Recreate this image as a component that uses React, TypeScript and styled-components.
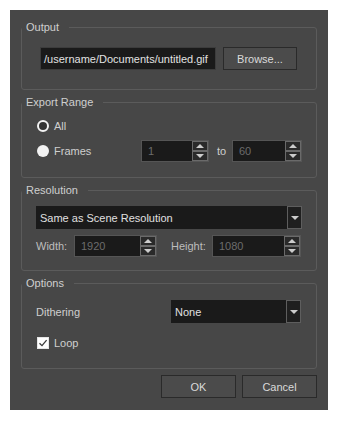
import React, { FC } from "react"
import styled, { createGlobalStyle } from "styled-components"

const GlobalStyle = createGlobalStyle`
  body {
    margin: 0;
    background: #ffffff;
    font-family: "Liberation Sans", Arial, sans-serif;
    font-size: 11px;
  }
`

const Dialog = styled.div`
  margin: 10px 0 0 10px;
  width: 318px;
  height: 400px;
  box-sizing: border-box;
  background: #474747;
  padding: 10px 11px 0 11px;
  display: flex;
  flex-direction: column;
  gap: 5px;
  color: #cfcfcf;
`

const Group = styled.fieldset<{ pad: string }>`
  margin: 0;
  min-width: 0;
  border: 1px solid #5b5b5b;
  border-radius: 3px;
  padding: ${({ pad }) => pad};
  display: flex;
  flex-direction: column;
`

const Legend = styled.legend<{ shift: number }>`
  margin-left: ${({ shift }) => -shift}px;
  padding: 0 10px 0 4px;
  line-height: 14px;
  color: #cfcfcf;
`

const Row = styled.div<{ gap?: number; top?: number }>`
  display: flex;
  align-items: center;
  gap: ${({ gap }) => gap ?? 0}px;
  margin-top: ${({ top }) => top ?? 0}px;
`

const PathField = styled.div`
  width: 176px;
  height: 23px;
  box-sizing: border-box;
  background: #1a1a1a;
  border: 1px solid #3c3c3c;
  padding-left: 3px;
  display: flex;
  align-items: center;
  color: #e2e2e2;
  white-space: nowrap;
  overflow: hidden;
`

const Button = styled.button<{ w: number }>`
  width: ${({ w }) => w}px;
  height: 23px;
  box-sizing: border-box;
  background: #4b4b4b;
  border: 1px solid #2a2a2a;
  border-radius: 0;
  color: #dadada;
  font-family: inherit;
  font-size: 11px;
  padding: 0;
`

const Label = styled.span<{ dim?: boolean; w?: number; ml?: number }>`
  color: ${({ dim }) => (dim ? "#bdbdbd" : "#cfcfcf")};
  white-space: nowrap;
  ${({ w }) => (w ? `width: ${w}px;` : "")}
  margin-left: ${({ ml }) => ml ?? 0}px;
`

const Radio = styled.span<{ filled?: boolean }>`
  width: 12px;
  height: 12px;
  box-sizing: border-box;
  border-radius: 50%;
  background: ${({ filled }) => (filled ? "#f2f2f2" : "#333333")};
  border: ${({ filled }) => (filled ? "none" : "2.5px solid #f2f2f2")};
  flex: none;
`

const SpinWrap = styled.div<{ w: number }>`
  width: ${({ w }) => w}px;
  height: 22px;
  box-sizing: border-box;
  border: 1px solid #555555;
  background: #1a1a1a;
  display: flex;
`

const SpinValue = styled.div`
  flex: 1;
  display: flex;
  align-items: center;
  padding-left: 6px;
  color: #6c6c6c;
`

const SpinArrows = styled.div`
  width: 16px;
  display: flex;
  flex-direction: column;
`

const ArrowBtn = styled.div`
  flex: 1;
  box-sizing: border-box;
  border: 1px solid #6a6a6a;
  background: #2a2a2a;
  display: flex;
  align-items: center;
  justify-content: center;
`

const Tri = styled.span<{ up?: boolean }>`
  width: 0;
  height: 0;
  border-left: 4px solid transparent;
  border-right: 4px solid transparent;
  ${({ up }) =>
    up ? "border-bottom: 4px solid #cccccc;" : "border-top: 4px solid #cccccc;"}
`

const Combo = styled.div<{ w?: number }>`
  ${({ w }) => (w ? `width: ${w}px;` : "flex: 1;")}
  height: 23px;
  box-sizing: border-box;
  background: #1a1a1a;
  display: flex;
  color: #e0e0e0;
`

const ComboText = styled.div`
  flex: 1;
  display: flex;
  align-items: center;
  padding-left: 4px;
`

const ComboArrow = styled.div`
  width: 15px;
  box-sizing: border-box;
  border: 1px solid #5e5e5e;
  background: #1f1f1f;
  display: flex;
  align-items: center;
  justify-content: center;
`

const Check = styled.span`
  width: 12px;
  height: 12px;
  box-sizing: border-box;
  background: #ffffff;
  border: 1px solid #e6e6e6;
  display: flex;
  align-items: center;
  justify-content: center;
  flex: none;
`

const Footer = styled.div`
  display: flex;
  justify-content: flex-end;
  gap: 6px;
  margin-top: 1px;
`

const Spin: FC<{ w: number; value: string }> = ({ w, value }) => (
  <SpinWrap w={w}>
    <SpinValue>{value}</SpinValue>
    <SpinArrows>
      <ArrowBtn>
        <Tri up />
      </ArrowBtn>
      <ArrowBtn>
        <Tri />
      </ArrowBtn>
    </SpinArrows>
  </SpinWrap>
)

const Dropdown: FC<{ w?: number; text: string }> = ({ w, text }) => (
  <Combo w={w}>
    <ComboText>{text}</ComboText>
    <ComboArrow>
      <Tri />
    </ComboArrow>
  </Combo>
)

export default function App() {
  return (
    <>
      <GlobalStyle />
      <Dialog>
        <Group pad="13px 18px 19px 18px">
          <Legend shift={18}>Output</Legend>
          <Row gap={7}>
            <PathField>/username/Documents/untitled.gif</PathField>
            <Button w={74}>Browse...</Button>
          </Row>
        </Group>

        <Group pad="11px 13px 15px 15px">
          <Legend shift={15}>Export Range</Legend>
          <Row gap={5}>
            <Radio />
            <Label>All</Label>
          </Row>
          <Row top={8}>
            <Radio filled />
            <Label ml={5} w={87}>Frames</Label>
            <Spin w={68} value="1" />
            <Label ml={8} w={15}>to</Label>
            <Spin w={70} value="60" />
          </Row>
        </Group>

        <Group pad="9px 14px 13px 14px">
          <Legend shift={14}>Resolution</Legend>
          <Row>
            <Dropdown text="Same as Scene Resolution" />
          </Row>
          <Row top={6}>
            <Label dim w={38}>Width:</Label>
            <Spin w={83} value="1920" />
            <Label dim ml={14} w={41}>Height:</Label>
            <Spin w={89} value="1080" />
          </Row>
        </Group>

        <Group pad="10px 14px 19px 14px">
          <Legend shift={14}>Options</Legend>
          <Row>
            <Label w={135}>Dithering</Label>
            <Dropdown w={130} text="None" />
          </Row>
          <Row gap={5} top={14} style={{ paddingLeft: 1 }}>
            <Check>
              <svg width="10" height="10" viewBox="0 0 10 10">
                <path d="M1.5 5.2 L4 7.6 L8.6 2.2" fill="none" stroke="#3a3a3a" strokeWidth="1.3" />
              </svg>
            </Check>
            <Label>Loop</Label>
          </Row>
        </Group>

        <Footer>
          <Button w={75}>OK</Button>
          <Button w={75}>Cancel</Button>
        </Footer>
      </Dialog>
    </>
  )
}
